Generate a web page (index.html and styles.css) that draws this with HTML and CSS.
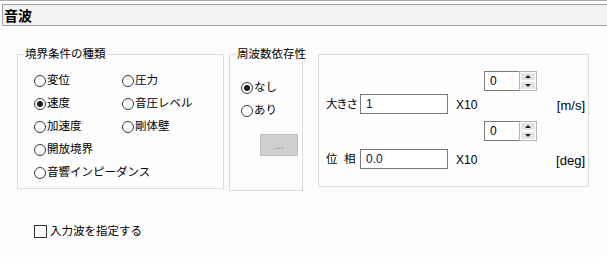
FILE: index.html
```html
<!DOCTYPE html>
<html lang="ja">

<head>
    <meta charset="UTF-8">
    <title>音波</title>
    <link rel="stylesheet" href="styles.css">
</head>

<body>
    <div class="header">
        <div class="title">音波</div>
    </div>

    <div class="groups">
        <!-- 境界条件 -->
        <div class="group group-boundary">
            <span class="group-title">境界条件の種類</span>
            <div class="radio-grid">
                <label class="radio"><span class="radio-mark"></span>変位</label>
                <label class="radio"><span class="radio-mark"></span>圧力</label>
                <label class="radio"><span class="radio-mark checked"></span>速度</label>
                <label class="radio"><span class="radio-mark"></span>音圧レベル</label>
                <label class="radio"><span class="radio-mark"></span>加速度</label>
                <label class="radio"><span class="radio-mark"></span>剛体壁</label>
                <label class="radio full"><span class="radio-mark"></span>開放境界</label>
                <label class="radio full"><span class="radio-mark"></span>音響インピーダンス</label>
            </div>
        </div>

        <!-- 周波数依存性 -->
        <div class="group group-freq">
            <span class="group-title">周波数依存性</span>
            <div class="radio-list">
                <label class="radio"><span class="radio-mark checked"></span>なし</label>
                <label class="radio"><span class="radio-mark"></span>あり</label>
            </div>
            <button class="dots-button">...</button>
        </div>

        <!-- 値 -->
        <div class="group group-value">
            <div class="value-row spin-row row-1">
                <div class="spinner">
                    <span class="spin-value">0</span>
                    <span class="spin-buttons">
                        <span class="spin-btn"><span class="arrow-up"></span></span>
                        <span class="spin-btn"><span class="arrow-down"></span></span>
                    </span>
                </div>
            </div>

            <div class="value-row row-2">
                <span class="field-label tight">大きさ</span>
                <span class="text-input">1</span>
                <span class="exp">X10</span>
                <span class="unit">[m/s]</span>
            </div>

            <div class="value-row spin-row row-3">
                <div class="spinner">
                    <span class="spin-value">0</span>
                    <span class="spin-buttons">
                        <span class="spin-btn"><span class="arrow-up"></span></span>
                        <span class="spin-btn"><span class="arrow-down"></span></span>
                    </span>
                </div>
            </div>

            <div class="value-row row-4">
                <span class="field-label">位&nbsp;&nbsp;相</span>
                <span class="text-input">0.0</span>
                <span class="exp">X10</span>
                <span class="unit">[deg]</span>
            </div>
        </div>
    </div>

    <div class="options">
        <label class="checkbox"><span class="check-mark"></span>入力波を指定する</label>
    </div>
</body>

</html>
```

FILE: styles.css
```css
* {
    margin: 0;
    padding: 0;
    box-sizing: border-box;
}

body {
    font-family: "Liberation Sans", "Noto Sans CJK JP", sans-serif;
    font-size: 11.5px;
    color: #000;
    background-color: #fcfdfc;
    width: 607px;
    height: 257px;
    overflow: hidden;
}

.header {
    border-top: 1px solid #a8a8a8;
}

.title {
    margin: 3px 0 0 2px;
    height: 22px;
    border: 1px solid #a0a0a0;
    border-right: none;
    background-color: #f2f2f0;
    padding-left: 1px;
    font-family: "Noto Sans CJK JP", sans-serif;
    font-size: 14px;
    font-weight: bold;
    line-height: 20px;
}

.groups {
    display: flex;
    align-items: flex-start;
    margin-top: 28px;
    padding-left: 17px;
}

.group {
    position: relative;
    border: 1px solid #dcdcdc;
}

.group-title {
    position: absolute;
    top: -8px;
    left: 6px;
    padding: 0 1px;
    line-height: 15px;
    background-color: #fcfdfc;
    white-space: nowrap;
}

.group-boundary {
    width: 207px;
    height: 135px;
    padding: 14px 0 0 16px;
}

.group-freq {
    width: 74px;
    height: 137px;
    margin-left: 5px;
    padding: 21px 0 0 11px;
}

.group-value {
    width: 271px;
    height: 133px;
    margin-left: 15px;
    padding: 16px 3px 0 7px;
}

.radio-grid {
    display: grid;
    grid-template-columns: 88px auto;
    grid-auto-rows: 23px;
}

.radio-list {
    display: grid;
    grid-auto-rows: 23px;
}

.radio,
.checkbox {
    display: flex;
    align-items: center;
    white-space: nowrap;
    line-height: 15px;
}

.radio.full {
    grid-column: 1 / 3;
}

.radio-mark {
    position: relative;
    width: 12px;
    height: 12px;
    margin-right: 1px;
    border: 1px solid #3a3a3a;
    border-radius: 50%;
    background-color: #fff;
}

.radio-mark.checked::after {
    content: "";
    position: absolute;
    top: 2px;
    left: 2px;
    width: 6px;
    height: 6px;
    border-radius: 50%;
    background-color: #1e1e1e;
}

.dots-button {
    display: block;
    width: 38px;
    height: 22px;
    margin: 12px 0 0 19px;
    border: 1px solid #bdbdbd;
    background-color: #cfcfcf;
    color: #8c8c8c;
    font-family: "Liberation Sans", sans-serif;
    font-size: 11px;
    line-height: 18px;
}

.value-row {
    display: flex;
    align-items: center;
    height: 20px;
}

.spin-row {
    padding-left: 158px;
}

.row-2 {
    margin-top: 3px;
}

.row-3 {
    margin-top: 7px;
}

.row-4 {
    margin-top: 8px;
}

.spinner {
    display: flex;
    width: 53px;
    height: 20px;
}

.spin-value {
    width: 35px;
    border: 1px solid #7a7a7a;
    border-right: none;
    background-color: #fff;
    padding-left: 5px;
    font-size: 12px;
    line-height: 18px;
}

.spin-buttons {
    display: flex;
    flex-direction: column;
    width: 18px;
    border: 1px solid #b4b4b4;
    background-color: #fff;
}

.spin-btn {
    flex: 1;
    display: flex;
    align-items: center;
    justify-content: center;
    background-color: #e4e4e4;
    border: 1px solid #fff;
}

.arrow-up {
    width: 0;
    height: 0;
    border-left: 3px solid transparent;
    border-right: 3px solid transparent;
    border-bottom: 3px solid #1a1a1a;
}

.arrow-down {
    width: 0;
    height: 0;
    border-left: 3px solid transparent;
    border-right: 3px solid transparent;
    border-top: 3px solid #1a1a1a;
}

.field-label {
    width: 34px;
    white-space: nowrap;
    line-height: 15px;
}

.field-label.tight {
    letter-spacing: -1.3px;
}

.text-input {
    width: 88px;
    height: 20px;
    border: 1px solid #7a7a7a;
    background-color: #fff;
    padding-left: 5px;
    color: #10104a;
    font-size: 12px;
    line-height: 18px;
}

.exp {
    padding-left: 8px;
    font-size: 12px;
    line-height: 15px;
    margin-top: 3px;
}

.unit {
    margin-left: auto;
    font-size: 13px;
    line-height: 15px;
    margin-top: 3px;
}

.options {
    margin-top: 33px;
    padding-left: 34px;
}

.check-mark {
    width: 13px;
    height: 13px;
    margin-right: 3px;
    border: 1px solid #333;
    background-color: #fff;
}
```
